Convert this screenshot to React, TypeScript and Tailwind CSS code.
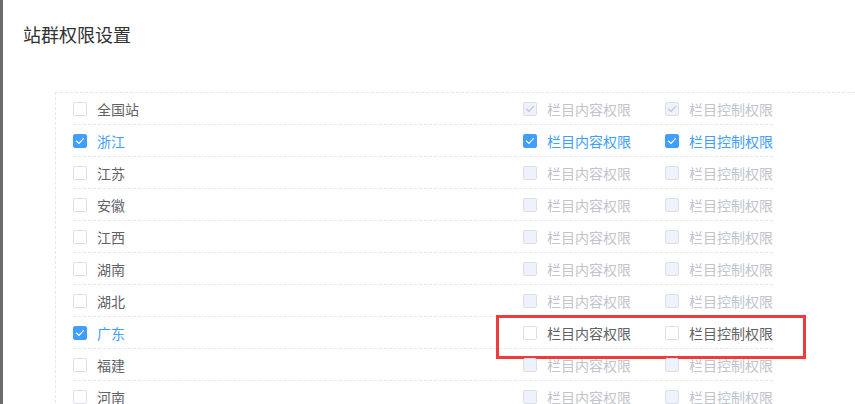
import React from "react";

type BoxState = "off" | "on" | "disOff" | "disOn";

function Box({ s }: { s: BoxState }) {
  const cls =
    s === "on"
      ? "bg-[#409eff] border-[#409eff]"
      : s === "off"
      ? "bg-white border-[#dcdfe6]"
      : "bg-[#edf2fc] border-[#dcdfe6]";
  const showCheck = s === "on" || s === "disOn";
  return (
    <span className={`w-[14px] h-[14px] shrink-0 rounded-[2px] border ${cls} flex items-center justify-center`}>
      {showCheck && (
        <svg width="12" height="12" viewBox="0 0 12 12">
          <polyline
            points="2.6,6.2 5,8.4 9.4,3.6"
            fill="none"
            stroke={s === "on" ? "#ffffff" : "#c0c4cc"}
            strokeWidth="1.2"
            strokeLinecap="square"
          />
        </svg>
      )}
    </span>
  );
}

function Check({ s, label, w }: { s: BoxState; label: string; w: string }) {
  const color =
    s === "on" ? "text-[#409eff]" : s === "off" ? "text-[#606266]" : "text-[#c0c4cc]";
  return (
    <span className={`flex items-center ${w}`}>
      <Box s={s} />
      <span className={`ml-[10px] text-[14px] leading-[20px] whitespace-nowrap ${color}`}>{label}</span>
    </span>
  );
}

const rows: { name: string; left: BoxState; right: BoxState; mark?: boolean }[] = [
  { name: "全国站", left: "off", right: "disOn" },
  { name: "浙江", left: "on", right: "on" },
  { name: "江苏", left: "off", right: "disOff" },
  { name: "安徽", left: "off", right: "disOff" },
  { name: "江西", left: "off", right: "disOff" },
  { name: "湖南", left: "off", right: "disOff" },
  { name: "湖北", left: "off", right: "disOff" },
  { name: "广东", left: "on", right: "off", mark: true },
  { name: "福建", left: "off", right: "disOff" },
  { name: "河南", left: "off", right: "disOff" },
];

export default function App() {
  return (
    <div
      className="w-[855px] h-[404px] overflow-hidden flex bg-white"
      style={{ fontFamily: '"Noto Sans CJK SC", "Noto Sans", sans-serif' }}
    >
      <div className="w-[3px] shrink-0 bg-[#6b6b6b]" />
      <div className="flex-1 flex flex-col">
        <div className="pt-[22px] pl-[20px] text-[18px] leading-[24px] text-[#303133]">站群权限设置</div>
        <div className="mt-[46px] ml-[52px] flex-1 border-l border-t border-dashed border-[#e4e7ed] pl-[17px]">
          {rows.map((r) => (
            <div
              key={r.name}
              className="relative w-[700px] h-[32px] flex items-center border-b border-dashed border-[#e4e7ed]"
            >
              <Check s={r.left} label={r.name} w="" />
              <div className="ml-auto flex items-center">
                <Check s={r.right} label="栏目内容权限" w="w-[142px]" />
                <Check s={r.right} label="栏目控制权限" w="w-[108px]" />
              </div>
              {r.mark && (
                <div className="absolute left-[423px] top-[-2px] w-[310px] h-[44px] border-[3px] border-[#ef3b3b]" />
              )}
            </div>
          ))}
        </div>
      </div>
    </div>
  );
}
